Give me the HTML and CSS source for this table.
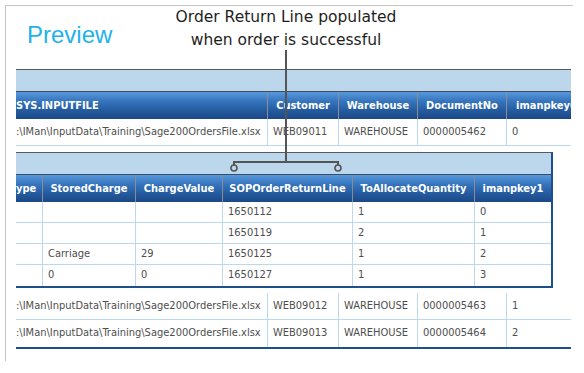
FILE: index.html
```html
<!DOCTYPE html>
<html>
<head>
<meta charset="utf-8">
<link rel="stylesheet" href="styles.css">
</head>
<body>
<div class="frame">
  <div class="head">
    <div class="title">Preview</div>
    <div class="note">Order Return Line populated<br>when order is successful</div>
  </div>
  <div class="grid">
    <div class="band"></div>
    <div class="mrow mhead">
      <div class="th first">SYS.INPUTFILE</div>
      <div class="th">Customer</div>
      <div class="th">Warehouse</div>
      <div class="th">DocumentNo</div>
      <div class="th">imanpkey0</div>
    </div>
    <div class="mrow mdata">
      <div class="td first">:\IMan\InputData\Training\Sage200OrdersFile.xlsx</div>
      <div class="td">WEB09011</div>
      <div class="td">WAREHOUSE</div>
      <div class="td">0000005462</div>
      <div class="td">0</div>
    </div>
    <div class="detail">
      <div class="sub">
        <div class="band"></div>
        <div class="srow shead">
          <div class="th first">ype</div>
          <div class="th">StoredCharge</div>
          <div class="th">ChargeValue</div>
          <div class="th">SOPOrderReturnLine</div>
          <div class="th">ToAllocateQuantity</div>
          <div class="th">imanpkey1</div>
        </div>
        <div class="srow sdata">
          <div class="td first"></div><div class="td"></div><div class="td"></div>
          <div class="td">1650112</div><div class="td">1</div><div class="td">0</div>
        </div>
        <div class="srow sdata">
          <div class="td first"></div><div class="td"></div><div class="td"></div>
          <div class="td">1650119</div><div class="td">2</div><div class="td">1</div>
        </div>
        <div class="srow sdata">
          <div class="td first"></div><div class="td">Carriage</div><div class="td">29</div>
          <div class="td">1650125</div><div class="td">1</div><div class="td">2</div>
        </div>
        <div class="srow sdata last">
          <div class="td first"></div><div class="td">0</div><div class="td">0</div>
          <div class="td">1650127</div><div class="td">1</div><div class="td">3</div>
        </div>
      </div>
    </div>
    <div class="mrow mdata">
      <div class="td first">:\IMan\InputData\Training\Sage200OrdersFile.xlsx</div>
      <div class="td">WEB09012</div>
      <div class="td">WAREHOUSE</div>
      <div class="td">0000005463</div>
      <div class="td">1</div>
    </div>
    <div class="mrow mdata last">
      <div class="td first">:\IMan\InputData\Training\Sage200OrdersFile.xlsx</div>
      <div class="td">WEB09013</div>
      <div class="td">WAREHOUSE</div>
      <div class="td">0000005464</div>
      <div class="td">2</div>
    </div>
  </div>
</div>
<svg class="callout" width="584" height="373" viewBox="0 0 584 373">
  <path d="M286 50 V162" stroke="#555" stroke-width="2" fill="none"/>
  <path d="M234 165 V162 H338 V165" stroke="#555" stroke-width="2" fill="none"/>
  <circle cx="234" cy="168" r="3" stroke="#555" stroke-width="1.6" fill="none"/>
  <circle cx="338" cy="168" r="3" stroke="#555" stroke-width="1.6" fill="none"/>
</svg>
</body>
</html>
```
FILE: styles.css
```css
html, body {
  margin: 0;
  padding: 0;
  background: #fff;
}
body {
  position: relative;
  width: 584px;
  height: 373px;
  overflow: hidden;
}
.frame {
  margin: 5px 0 0 5px;
  width: 567px;
  height: 355px;
  border-top: 1px solid #c4c4c4;
  border-left: 1px solid #c4c4c4;
}
.head {
  display: grid;
  grid-template-columns: 150px 260px;
  height: 63px;
}
.title {
  padding: 15px 0 0 21px;
  font: 24px/28px "Liberation Sans", Arial, sans-serif;
  color: #23b2ea;
}
.note {
  text-align: center;
  font: 15.5px/23px "DejaVu Sans", sans-serif;
  color: #1e1e1e;
}
.grid {
  margin-left: 10px;
  width: 555px;
  overflow: hidden;
  font: 11px "DejaVu Sans Condensed", "DejaVu Sans", sans-serif;
  border-bottom: 2px solid #1d4f8e;
}
.band {
  height: 21px;
  background: #bcd7ec;
  border-top: 1px solid #56595e;
  border-bottom: 1px solid #3b4d63;
}
.mrow {
  display: grid;
  grid-template-columns: 251px 71px 79px 89px 65px;
}
.srow {
  display: grid;
  grid-template-columns: 26px 93px 87px 130px 122px 77px;
}
.th {
  height: 27px;
  line-height: 27px;
  box-sizing: border-box;
  background: linear-gradient(to bottom, #5898dc 0%, #3574bc 35%, #245a9e 70%, #1b4886 100%);
  color: #fff;
  font-weight: bold;
  text-align: center;
  white-space: nowrap;
  overflow: hidden;
  border-left: 1px solid #8a8e94;
}
.th.first {
  border-left: none;
  text-align: left;
}
.mhead .th:last-child {
  text-align: left;
  padding-left: 9px;
}
.td {
  box-sizing: border-box;
  padding: 0 5px;
  color: #4e4e4e;
  white-space: nowrap;
  overflow: hidden;
  border-left: 1px solid #bcd8ee;
  border-bottom: 1px solid #bcd8ee;
}
.td.first {
  border-left: none;
  padding: 0;
}
.mdata .td {
  height: 27px;
  line-height: 26px;
}
.mdata.last .td {
  border-bottom: none;
}
.detail {
  padding: 6px 0 5px;
}
.sub {
  width: 537px;
  box-sizing: border-box;
  border-right: 2px solid #1d4f8e;
  border-bottom: 2px solid #1d4f8e;
}
.sdata .td {
  height: 21px;
  line-height: 20px;
}
.sdata .td.first {
  border-bottom: 1px solid #bcd8ee;
}
.sdata.last .td {
  border-bottom: none;
}
.callout {
  position: absolute;
  top: 0;
  left: 0;
  pointer-events: none;
}
```
